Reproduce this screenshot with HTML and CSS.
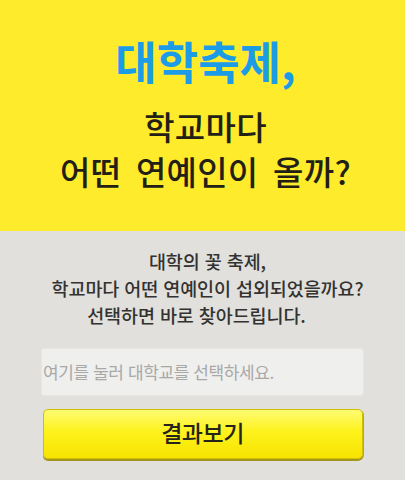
FILE: index.html
```html
<!DOCTYPE html>
<html lang="ko">
<head>
<meta charset="utf-8">
<title>대학축제</title>
<link rel="stylesheet" href="styles.css">
</head>
<body>
<div class="page">
  <header class="hero">
    <h1 class="hero-title">대학축제,</h1>
    <p class="hero-sub">학교마다<br>어떤 연예인이 올까?</p>
  </header>
  <main class="panel">
    <p class="intro">대학의 꽃 축제,<br>학교마다 어떤 연예인이 섭외되었을까요?<br><span class="intro-last">선택하면 바로 찾아드립니다.</span></p>
    <div class="select-box">여기를 눌러 대학교를 선택하세요.</div>
    <button class="result-btn" type="button">결과보기</button>
  </main>
</div>
</body>
</html>
```
FILE: styles.css
```css
html, body {
  margin: 0;
  padding: 0;
}
body {
  background: #e1e0dc;
  font-family: "Noto Sans CJK KR", "Noto Sans", sans-serif;
  width: 405px;
  height: 480px;
  overflow: hidden;
}
.page {
  display: flex;
  flex-direction: column;
}
.hero {
  background: #fdeb2c;
  height: 231px;
  box-sizing: border-box;
  padding-top: 36px;
  text-align: center;
  padding-left: 6px;
}
.hero-title {
  margin: 0;
  font-size: 45px;
  line-height: 50px;
  font-weight: 700;
  color: #1c9be6;
  letter-spacing: 0;
}
.hero-sub {
  margin: 18px 0 0;
  font-size: 33px;
  line-height: 45px;
  color: #231f16;
  font-weight: 500;
  letter-spacing: 0.3px;
  word-spacing: 5px;
}
.panel {
  display: flex;
  flex-direction: column;
  align-items: center;
  padding-top: 17px;
}
.intro {
  margin: 0;
  font-size: 18.5px;
  line-height: 27px;
  letter-spacing: -0.1px;
  color: #333230;
  font-weight: 500;
  text-align: center;
  padding-left: 10px;
}
.intro-last {
  margin-right: 22px;
}
.select-box {
  margin-top: 19px;
  width: 323px;
  height: 48px;
  box-sizing: border-box;
  background: #efefee;
  border: 1px solid #e6e6e3;
  border-radius: 3px;
  color: #a8a8a6;
  font-size: 17px;
  letter-spacing: -0.4px;
  line-height: 46px;
  padding-left: 1px;
}
.result-btn {
  margin-top: 13px;
  width: 320px;
  height: 50px;
  box-sizing: border-box;
  border: 1px solid #d2c000;
  border-radius: 5px;
  background: linear-gradient(#fffb72 0%, #fdf21c 45%, #f7e300 100%);
  box-shadow: 0 2px 0 #a3961c, 1px 1px 0 #b9ab10;
  font-family: "Noto Sans CJK KR", "Noto Sans", sans-serif;
  font-size: 23px;
  font-weight: 500;
  color: #26231a;
  letter-spacing: -0.5px;
  padding: 0 0 4px;
}
```
